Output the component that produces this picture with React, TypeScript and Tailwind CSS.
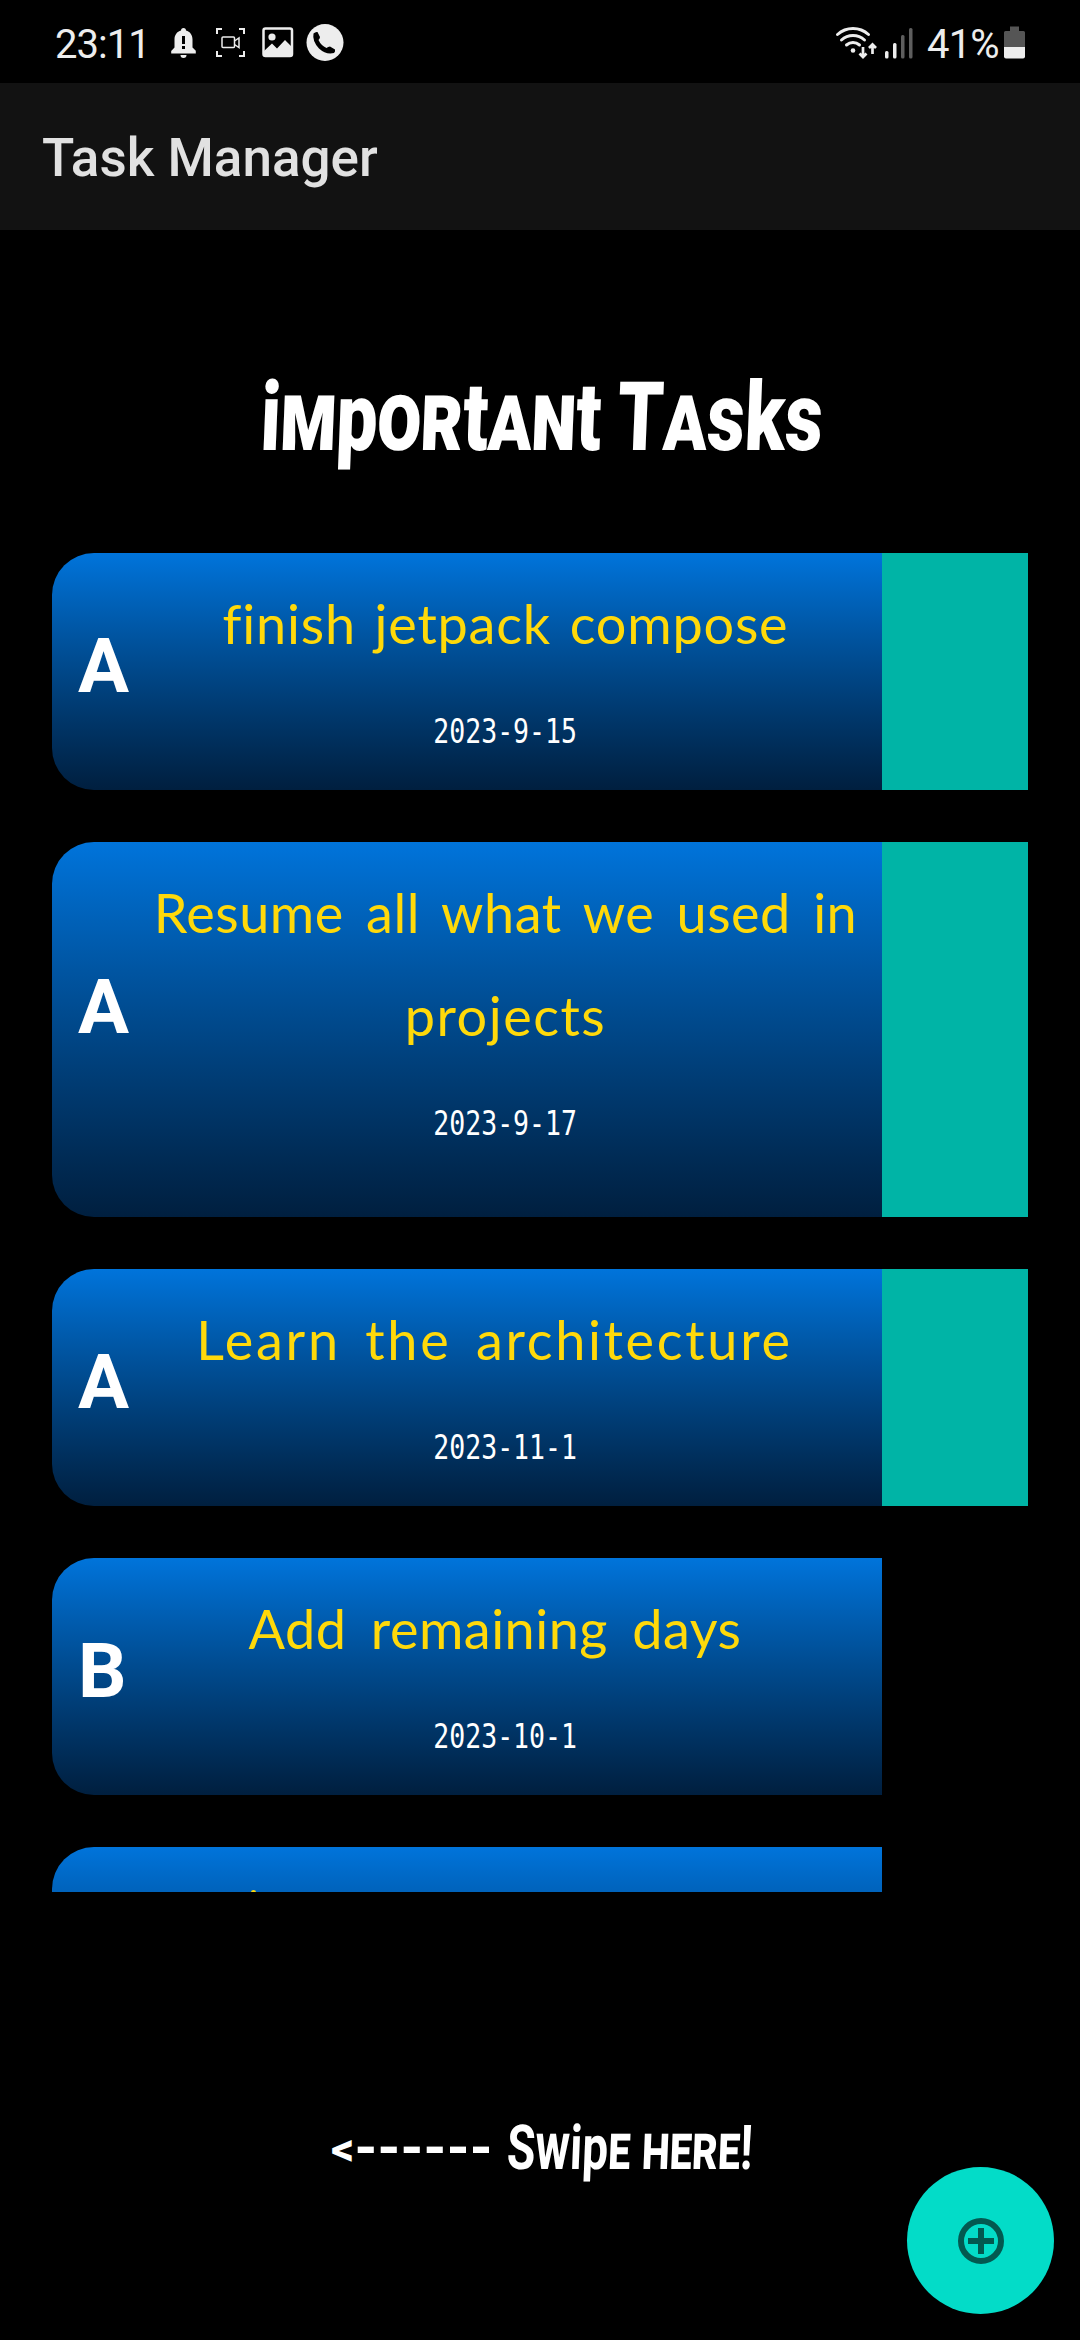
type Title = { text: string; spacing: string };
type Task = { priority: string; lines: Title[]; date: string; highlighted: boolean };

const tasks: Task[] = [
  {
    priority: "A",
    lines: [{ text: "finish jetpack compose", spacing: "tracking-[0.8px] [word-spacing:4px]" }],
    date: "2023-9-15",
    highlighted: true,
  },
  {
    priority: "A",
    lines: [
      { text: "Resume all what we used in", spacing: "tracking-[0.5px] [word-spacing:8px]" },
      { text: "projects", spacing: "tracking-[1.5px]" },
    ],
    date: "2023-9-17",
    highlighted: true,
  },
  {
    priority: "A",
    lines: [{ text: "Learn the architecture", spacing: "mr-[22px] tracking-[2.7px] [word-spacing:8px]" }],
    date: "2023-11-1",
    highlighted: true,
  },
  {
    priority: "B",
    lines: [{ text: "Add remaining days", spacing: "mr-[21px] tracking-[0.5px] [word-spacing:10px]" }],
    date: "2023-10-1",
    highlighted: false,
  },
];

function StatusBar() {
  return (
    <header className="flex h-[83px] shrink-0 items-start bg-black text-[#ededed]">
      <span className="mt-[21px] ml-[55px] w-[116px] text-[40px] leading-[47px] tracking-[-1px]">23:11</span>
      <svg className="mt-[27px] h-[32px] w-[25px]" viewBox="0 0 25 32" fill="currentColor">
        <path d="M12.500 1a2.500 2.500 0 0 1 2.500 2.500c4 1 6.500 4.500 6.500 9v8l3.300 3.300V26.500H.2V24L3.500 20.500v-8c0-4.500 2.500-8 6.500-9a2.500 2.500 0 0 1 2.500-2.500z" />
        <path d="M9.500 28h6a3 3 0 0 1-6 0z" />
        <path d="M11 9h3v8h-3zM11 19h3v3h-3z" fill="#000" />
      </svg>
      <svg className="mt-[27px] ml-[19px] h-[31px] w-[31px]" viewBox="0 0 31 31" fill="none" stroke="currentColor" strokeWidth="2">
        <path d="M2 7V2h5M24 2h5v5M29 24v5h-5M7 29H2v-5" />
        <rect x="7" y="10" width="12.500" height="10.500" rx="1" strokeWidth="1.500" />
        <path d="M19.500 14l4.500-3v9.500l-4.500-3" strokeWidth="1.500" />
      </svg>
      <svg className="mt-[27px] ml-[16px] h-[31px] w-[32px]" viewBox="0 0 32 31">
        <rect x="1.500" y="1.500" width="28.500" height="27.500" rx="2" fill="none" stroke="currentColor" strokeWidth="2.500" />
        <circle cx="10" cy="10" r="3.600" fill="currentColor" />
        <path d="M2 24l8-7.500 5 5L23 13l7 7v9H2z" fill="currentColor" />
      </svg>
      <svg className="mt-[24px] ml-[12px] h-[38px] w-[38px]" viewBox="0 0 38 38">
        <circle cx="19" cy="18.500" r="18.500" fill="currentColor" />
        <path
          d="M7.500 9.500Q9.500 7.500 11.500 8L14 13Q14 14.500 12.500 16Q15 21.500 20.500 24Q22 22.500 24 22.500L29 25.500Q29.500 27.500 28 29Q20 31 13 24.500Q6 17 7.500 9.500z"
          fill="#000"
        />
      </svg>
      <svg className="mt-[25px] ml-auto h-[35px] w-[44px]" viewBox="0 0 44 35" fill="none" stroke="currentColor" strokeLinecap="round">
        <path d="M2.500 9.500a23 23 0 0 1 31 0M6.500 15a17 17 0 0 1 23 0M11.500 20a10 10 0 0 1 13 0" strokeWidth="3" />
        <circle cx="18" cy="25.500" r="2.300" fill="currentColor" stroke="none" />
        <path d="M28 22v9M24.500 28.500l3.500 3.500 3.500-3.500M37.500 29v-8M34 23l3.500-3.500L41 23" strokeWidth="2.700" strokeLinecap="butt" />
      </svg>
      <svg className="mt-[28px] ml-[6px] h-[31px] w-[28px]" viewBox="0 0 28 31" fill="currentColor">
        <rect x="0" y="23" width="3.500" height="7.500" rx="1.500" />
        <rect x="8" y="15" width="3.500" height="15.500" rx="1.500" />
        <rect x="16" y="7" width="3.500" height="23.500" rx="1.500" fill="#5e5e5e" />
        <rect x="24" y="0" width="3.500" height="30.500" rx="1.500" fill="#5e5e5e" />
      </svg>
      <span className="mt-[21px] ml-[14px] w-[77px] text-[40px] leading-[47px] tracking-[-0.8px]">41%</span>
      <svg className="mt-[26px] mr-[55px] h-[33px] w-[21px]" viewBox="0 0 21 33">
        <path d="M6 0.500h9V5h4.500A1.500 1.500 0 0 1 21 6.500V21H0V6.500A1.500 1.500 0 0 1 1.500 5H6z" fill="#555" />
        <path d="M0 21h21v9.500a2 2 0 0 1-2 2H2a2 2 0 0 1-2-2z" fill="currentColor" />
      </svg>
    </header>
  );
}

function TaskCard({ task }: { task: Task }) {
  const tall = task.lines.length > 1;
  return (
    <article className={`flex shrink-0 ${tall ? "h-[375px]" : "h-[237px]"}`}>
      <div className="flex w-[830px] rounded-l-[42px] bg-linear-to-b from-[#0074db] to-[#001f3f]">
        <b className={`w-[77px] pl-[26px] text-[76px] leading-[90px] font-bold text-white ${tall ? "mt-[120px]" : "mt-[68px]"}`}>
          {task.priority}
        </b>
        <div className="flex flex-1 flex-col items-center pt-[19px]">
          {task.lines.map((line) => (
            <span
              key={line.text}
              className={`font-['Lato'] text-[54px] leading-[103px] whitespace-nowrap text-[#ffd90a] ${line.spacing}`}
            >
              {line.text}
            </span>
          ))}
          <time className="mt-[36px] origin-center scale-x-[0.78] font-['DejaVu_Sans_Mono'] text-[34px] leading-[40px] text-white">
            {task.date}
          </time>
        </div>
      </div>
      {task.highlighted && <div className="w-[146px] bg-[#00b4a6]" />}
    </article>
  );
}

export default function App() {
  return (
    <main className="relative flex h-[2340px] w-[1080px] flex-col overflow-hidden bg-black font-['Roboto',sans-serif]">
      <StatusBar />
      <div className="flex h-[147px] shrink-0 items-center bg-[#121212] pt-[3px] pl-[42px]">
        <h1 className="text-[53px] leading-[62px] font-medium text-[#e1e1e1]">Task Manager</h1>
      </div>
      <h2 className="flex h-[323px] shrink-0 justify-center pt-[127px] leading-[120px] text-white">
        <span className="-skew-x-3 scale-x-[0.765] text-[96px] font-black whitespace-nowrap">
          i<span className="[font-variant:small-caps]">m</span>p<span className="[font-variant:small-caps]">or</span>t
          <span className="[font-variant:small-caps]">an</span>t T<span className="[font-variant:small-caps]">a</span>sks
        </span>
      </h2>
      <section className="flex h-[1339px] shrink-0 flex-col gap-[52px] overflow-hidden pl-[52px]">
        {tasks.map((task) => (
          <TaskCard key={task.date} task={task} />
        ))}
        <div className="h-[237px] w-[830px] shrink-0 rounded-l-[42px] bg-linear-to-b from-[#0074db] to-[#001f3f] pt-[43px] pl-[199px]">
          <div className="h-[4px] w-[5px] rounded-t-full bg-[#ffd90a]" />
        </div>
      </section>
      <footer className="mt-[195px] flex h-[120px] shrink-0 items-center pl-[331px] text-white">
        <span className="flex w-[176px] items-center font-bold">
          <span className="pt-[4px] text-[46px]">&lt;</span>
          <span className="text-[58px] tracking-[0.2px]">------</span>
        </span>
        <span className="origin-left -skew-x-3 scale-x-[0.745] text-[62px] font-bold whitespace-nowrap">
          S<span className="[font-variant:small-caps]">w</span>ip<span className="[font-variant:small-caps]">e here</span>!
        </span>
      </footer>
      <button className="absolute right-[26px] bottom-[26px] flex size-[147px] items-center justify-center rounded-full bg-[#03dcc8]">
        <svg className="size-[50px]" viewBox="0 0 50 50" fill="none" stroke="#035950">
          <circle cx="25" cy="25" r="20" strokeWidth="6" />
          <path d="M25 12v26M12 25h26" strokeWidth="6" />
        </svg>
      </button>
    </main>
  );
}
